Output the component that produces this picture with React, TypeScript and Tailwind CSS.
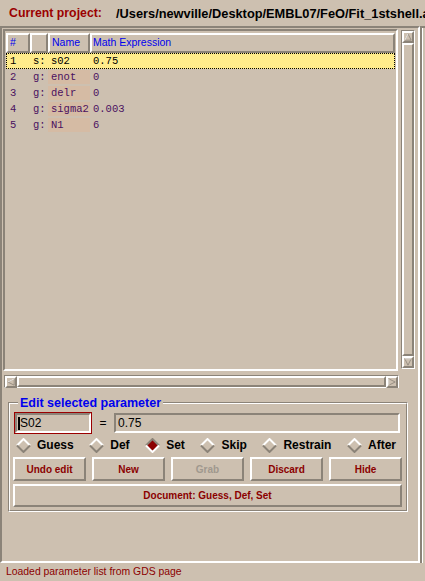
import React from "react";

// Tk-style "Edit parameters" panel
const RAISED =
  "border-2 border-t-white border-l-white border-r-[#8b8378] border-b-[#8b8378]";
const SUNKEN =
  "border-2 border-t-[#8b8378] border-l-[#8b8378] border-r-white border-b-white";
const SANS = "font-['Liberation_Sans',Arial,sans-serif]";
const MONO = "font-['Liberation_Mono','Courier_New',monospace]";

const rows = [
  ["1", "s:", "s02", "0.75"],
  ["2", "g:", "enot", "0"],
  ["3", "g:", "delr", "0"],
  ["4", "g:", "sigma2", "0.003"],
  ["5", "g:", "N1", "6"],
];

const radios = ["Guess", "Def", "Set", "Skip", "Restrain", "After"];

function Arrow({ dir }: { dir: "up" | "down" | "left" | "right" }) {
  const pts = {
    up: "5,1 9,9 1,9",
    down: "1,1 9,1 5,9",
    left: "1,5 9,1 9,9",
    right: "1,1 9,5 1,9",
  }[dir];
  return (
    <div className={`flex h-[12px] w-[12px] shrink-0 items-center justify-center ${RAISED}`}>
      <svg width="10" height="10" viewBox="0 0 10 10">
        <polygon points={pts} fill="#cdc0b0" stroke="#8b8378" strokeWidth="1" />
        <polyline
          points={dir === "up" ? "1,9 5,1" : dir === "left" ? "9,1 1,5" : dir === "down" ? "1,1 9,1" : "1,9 1,1"}
          fill="none"
          stroke="#ffffff"
          strokeWidth="1"
        />
      </svg>
    </div>
  );
}

function Diamond({ on }: { on: boolean }) {
  const hi = on ? "#8b8378" : "#ffffff";
  const lo = on ? "#ffffff" : "#8b8378";
  return (
    <svg width="15" height="15" viewBox="0 0 15 15" className="shrink-0">
      <polygon points="7.5,1 14,7.5 7.5,14 1,7.5" fill={on ? "#8b0000" : "#cdc0b0"} />
      <polyline points="1,7.5 7.5,1 14,7.5" fill="none" stroke={hi} strokeWidth="2" />
      <polyline points="1,7.5 7.5,14 14,7.5" fill="none" stroke={lo} strokeWidth="2" />
    </svg>
  );
}

export default function App() {
  return (
    <div className={`flex h-[581px] w-[425px] flex-col overflow-hidden bg-[#cdc0b0] ${SANS}`}>
      {/* project line */}
      <div className="flex h-[26px] shrink-0 items-center whitespace-nowrap pl-[9px] pt-[1px] font-bold">
        <span className="w-[107px] shrink-0 text-[12.3px] text-[#9b0000]">Current project:</span>
        <span className="text-[12.8px] text-black">/Users/newville/Desktop/EMBL07/FeO/Fit_1stshell.apj</span>
      </div>

      <div className="flex h-[537px] shrink-0">
        <div className="flex w-[420px] shrink-0 flex-col border-t-2 border-l-2 border-r-2 border-b-2 border-t-[#8b8378] border-l-[#8b8378] border-r-white border-b-white">
          {/* table + vertical scrollbar */}
          <div className="ml-[1px] mt-[1px] flex">
            <div className={`h-[342px] w-[395px] shrink-0 pl-[1px] pt-[2px] ${SUNKEN}`}>
              <div className="flex h-[20px] text-[10.5px] text-[#0000ee]">
                <div className={`flex w-[24px] items-center pl-[2px] ${RAISED}`}>#</div>
                <div className={`w-[18px] ${RAISED}`} />
                <div className={`flex w-[42px] items-center pl-[2px] ${RAISED}`}>Name</div>
                <div className={`flex w-[305px] items-center pl-[1px] ${RAISED}`}>Math Expression</div>
              </div>
              <div className={`text-[10.5px] ${MONO}`}>
                {rows.map((r, i) => (
                  <div
                    key={r[0]}
                    className={`flex h-[16px] w-[389px] items-center leading-[14px] ${
                      i === 0
                        ? "border border-dotted border-black bg-[#ffec8b] text-black"
                        : "border border-transparent text-[#4a1060]"
                    }`}
                  >
                    <span className="w-[23px] pl-[3px]">{r[0]}</span>
                    <span className="w-[18px] pl-[3px]">{r[1]}</span>
                    <span
                      className={`flex h-[14px] w-[42px] items-center pl-[3px] ${
                        i === 0 ? "" : "bg-[#d5bba4]"
                      }`}
                    >
                      {r[2]}
                    </span>
                    <span className="pl-[3px]">{r[3]}</span>
                  </div>
                ))}
              </div>
            </div>
            <div className="ml-[3px] mt-[1px] flex h-[339px] w-[14px] shrink-0 flex-col border border-t-[#8b8378] border-l-[#8b8378] border-r-white border-b-white">
              <Arrow dir="up" />
              <div className={`flex-1 ${RAISED}`} />
              <Arrow dir="down" />
            </div>
          </div>

          {/* horizontal scrollbar */}
          <div className="ml-[2px] mt-[4px] flex h-[13px] w-[395px] border border-t-[#8b8378] border-l-[#8b8378] border-r-white border-b-white">
            <Arrow dir="left" />
            <div className={`flex-1 ${RAISED}`} />
            <Arrow dir="right" />
          </div>

          {/* edit group */}
          <div className="relative ml-[6px] mt-[14px] h-[110px] w-[400px] border border-t-[#8b8378] border-l-[#8b8378] border-r-white border-b-white">
            <div className="h-full border border-t-white border-l-white border-r-[#8b8378] border-b-[#8b8378] px-[2px] pt-[8px]">
              <div className="flex h-[22px] items-center">
                <div className="ml-[2px] h-[22px] w-[78px] border border-[#9b0000]">
                  <div className={`flex h-full items-center text-[12px] ${SUNKEN}`}>
                    <span className="ml-[1px] h-[13px] w-[2px] bg-black" />
                    <span>S02</span>
                  </div>
                </div>
                <span className="w-[22px] text-center text-[12px]">=</span>
                <div className={`flex h-[20px] w-[286px] items-center pl-[2px] text-[12px] ${SUNKEN}`}>
                  0.75
                </div>
              </div>

              <div className="mt-[3px] flex h-[16px] items-center justify-between pl-[4px] pr-[8px] text-[12px] font-bold text-black">
                {radios.map((l) => (
                  <div key={l} className="flex items-center gap-[6px]">
                    <Diamond on={l === "Set"} />
                    <span>{l}</span>
                  </div>
                ))}
              </div>

              <div className="ml-[1px] mt-[4px] grid w-[389px] grid-cols-5 gap-[6px] text-[10px] font-bold">
                {["Undo edit", "New", "Grab", "Discard", "Hide"].map((b) => (
                  <div
                    key={b}
                    className={`flex h-[24px] items-center justify-center ${RAISED} ${
                      b === "Grab" ? "text-[#a0988e]" : "text-[#8b0000]"
                    }`}
                  >
                    {b}
                  </div>
                ))}
              </div>
              <div
                className={`ml-[1px] mt-[3px] flex h-[23px] w-[389px] items-center justify-center text-[10px] font-bold text-[#8b0000] ${RAISED}`}
              >
                Document: Guess, Def, Set
              </div>
            </div>
            <span className="absolute left-[9px] top-[-8px] bg-[#cdc0b0] px-[2px] text-[12.5px] font-bold leading-[16px] text-[#0000ee]">
              Edit selected parameter
            </span>
          </div>
        </div>

        {/* neighbouring pane edge */}
        <div className="w-[5px] shrink-0 border-l-2 border-t-2 border-l-[#8b8378] border-t-[#8b8378]">
          <div className="h-full w-[1px] bg-white" />
        </div>
      </div>

      <div className="flex h-[18px] items-center pl-[6px] text-[10.4px] text-[#8b0000]">
        Loaded parameter list from GDS page
      </div>
    </div>
  );
}
